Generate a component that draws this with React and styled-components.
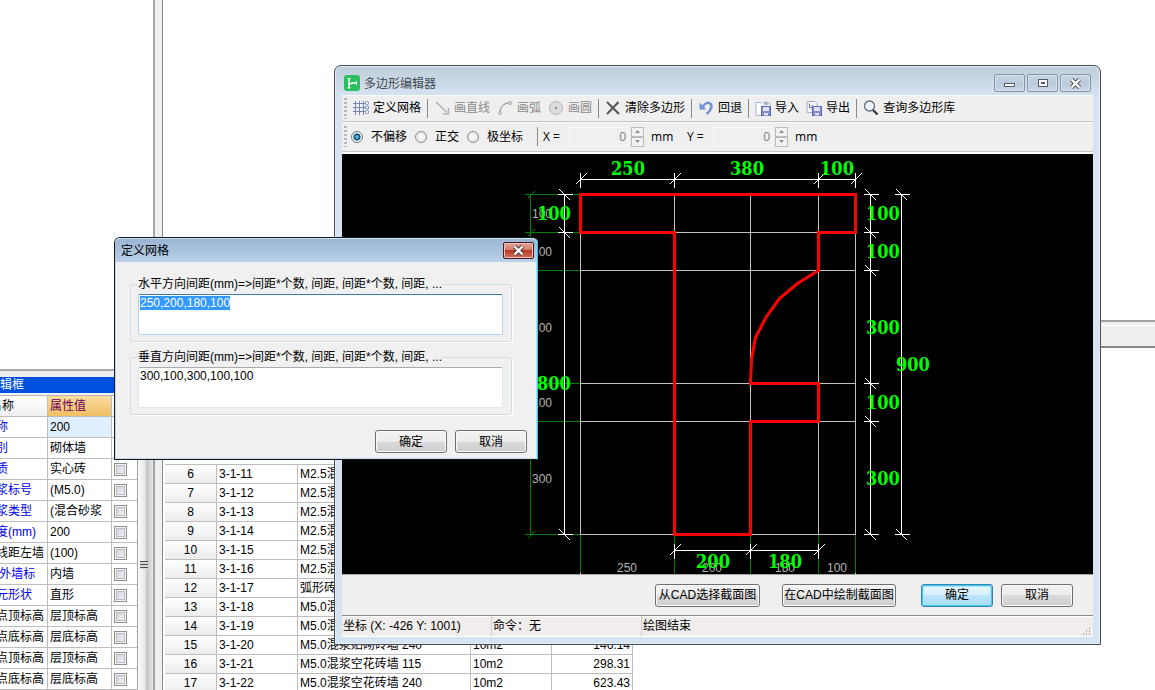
import React, { useEffect, useRef } from "react";
import styled, { createGlobalStyle, css } from "styled-components";

const GlobalStyle = createGlobalStyle`
  * { box-sizing: border-box; }
  html, body, #root { height: 100%; }
  body {
    margin: 0;
    overflow: hidden;
    background: #fff;
    color: #000;
    font: 12px/16px "Liberation Sans", "Noto Sans CJK SC", sans-serif;
  }
  button, input, textarea { font: inherit; color: inherit; }
`;

/* ---------- main application behind the windows ---------- */

const Desktop = styled.main`
  position: relative;
  display: flex;
  height: 100vh;
  overflow: hidden;
  background: #fff;
`;

const SidePane = styled.section`
  flex: none;
  display: flex;
  flex-direction: column;
  width: 193px;
  margin-left: -40px;
`;

const SideBlank = styled.div`
  flex: none;
  height: 369px;
`;

const SideTitle = styled.h2`
  flex: none;
  height: 27px;
  margin: 0;
  padding: 6px 0 0 4px;
  border-top: 2px solid #a9a9ad;
  border-bottom: 1px solid #b4b4b4;
  box-shadow: inset 0 6px #efedee, inset 0 -2px #f4f4f4;
  background: #0050e0;
  color: #fff;
  font-size: 12px;
  line-height: 16px;
  font-weight: 400;
`;

const SideBody = styled.div`
  flex: 1;
  display: flex;
  min-height: 0;
`;

const PropTable = styled.table`
  flex: 1;
  table-layout: fixed;
  border-collapse: separate;
  border-spacing: 0;
  height: max-content;
  td, th {
    height: 21px;
    padding: 0 0 0 2px;
    border-right: 1px solid #bdbdbd;
    border-bottom: 1px solid #bdbdbd;
    overflow: hidden;
    white-space: nowrap;
    text-align: left;
    font-weight: 400;
    line-height: 16px;
  }
  td:last-child, th:last-child { border-right: 0; }
  th:first-child { padding-left: 30px; }
`;

const PropHead = styled.th`
  background: ${(p) =>
    p.$active
      ? "linear-gradient(#f9dca0, #f0bf63)"
      : "linear-gradient(#ffffff, #f0f0f0)"};
  color: ${(p) => (p.$active ? "#6b0058" : "#000")};
`;

const PropName = styled.td`
  && { padding-left: 24px; }
  color: ${(p) => (p.$blue ? "#0000f0" : "#000")};
`;

const PropValue = styled.td`
  background: ${(p) => (p.$selected ? "#dfeffe" : "#fff")};
`;

const Tick = styled.input`
  appearance: none;
  display: block;
  width: 13px;
  height: 13px;
  margin: 0;
  border: 1px solid #8e8f8f;
  background: linear-gradient(135deg, #cbcfd5, #f6f6f6);
  box-shadow: inset 0 0 0 1px #f4f4f4, inset 0 0 0 2px #b9bcc2;
`;

const ScrollTrack = styled.div`
  flex: none;
  display: flex;
  justify-content: center;
  align-items: flex-start;
  width: 16px;
  padding-top: 165px;
  border-left: 1px solid #a0a0a0;
  background: linear-gradient(90deg, #fafafa, #e9e9ea 45%, #c4c4c6 60%, #e8e8e8);
`;

const ScrollGrip = styled.span`
  width: 8px;
  height: 8px;
  margin-right: 4px;
  background: repeating-linear-gradient(#4c4c4c 0 1px, #d8d8d8 1px 3px);
`;

const Splitter = styled.div`
  flex: none;
  width: 10px;
  border-left: 2px solid #a6a6aa;
  border-right: 1px solid #86868c;
  background: #efefef;
`;

const Workspace = styled.section`
  flex: 1;
  min-width: 0;
  display: flex;
  flex-direction: column;
`;

const WorkBlank = styled.div`
  flex: none;
  height: 320px;
`;

const WorkBand = styled.div`
  flex: none;
  height: 28px;
  border-top: 2px solid #a2a2a6;
  border-bottom: 2px solid #86868a;
  box-shadow: inset 0 3px #efefef, inset 0 4px #fff;
  background: #efefef;
`;

const QuotaTable = styled.table`
  width: 468px;
  margin: 116px 0 0 2px;
  table-layout: fixed;
  border-collapse: separate;
  border-spacing: 0;
  td {
    height: 19px;
    padding: 0 2px;
    border-right: 1px solid #bdbdbd;
    border-bottom: 1px solid #bdbdbd;
    overflow: hidden;
    white-space: nowrap;
    line-height: 16px;
  }
  tr:first-child td { border-top: 1px solid #bdbdbd; height: 20px; }
`;

const IndexCell = styled.td`
  background: linear-gradient(#ffffff, #ececec);
  text-align: center;
`;

const PriceCell = styled.td`
  text-align: right;
`;

/* ---------- shared window parts ---------- */

const PushButton = styled.button`
  height: 23px;
  min-width: ${(p) => p.$width || 72}px;
  padding: 0 1px;
  border: 1px solid #707070;
  border-radius: 3px;
  background: linear-gradient(#f3f3f3, #ebebeb 50%, #dadada 50%, #cdcdcd);
  box-shadow: inset 0 0 0 1px #fbfbfb;
  line-height: 16px;
  white-space: nowrap;
  ${(p) =>
    p.$primary &&
    css`
      border-color: #3c7fb1;
      background: linear-gradient(#eaf6fd, #d9f0fc 50%, #bde4fb 50%, #a9dbf6);
      box-shadow: inset 0 0 0 1px #3fcdf8, inset 0 0 0 2px #a5e6fb;
    `}
`;

/* ---------- polygon editor window ---------- */

const EditorWindow = styled.section`
  position: absolute;
  left: 334px;
  right: 54px;
  top: 65px;
  display: flex;
  flex-direction: column;
  padding: 0 7px 7px;
  border: 1px solid #4b4b52;
  border-radius: 7px 7px 0 0;
  background: linear-gradient(#bfcddb, #d6e4f1 30px);
  box-shadow: inset 0 0 0 1px #e4edf5;
`;

const TitleBar = styled.header`
  display: flex;
  align-items: center;
  height: 29px;
  padding: 5px 2px 0;
`;

const WindowTitle = styled.h1`
  flex: 1;
  margin: 0 0 0 4px;
  font: 400 12px/16px "Noto Sans CJK SC", sans-serif;
  color: #3f4750;
`;

const CaptionButtons = styled.div`
  display: flex;
  gap: 2px;
`;

const CaptionButton = styled.button`
  display: flex;
  align-items: center;
  justify-content: center;
  width: 31px;
  height: 18px;
  padding: 0;
  border: 1px solid #8793a6;
  border-radius: 2px;
  background: linear-gradient(#c9d6e4, #bccbdc 50%, #b9c9da 50%, #cbd9e7);
  box-shadow: inset 0 0 0 1px #d6e1ec;
`;

const ToolRow = styled.div`
  display: flex;
  align-items: center;
  gap: 1px;
  height: ${(p) => p.$height}px;
  padding-left: 2px;
  background: #efefef;
  border-bottom: 1px solid #c4c4c4;
  box-shadow: inset 0 1px #fafafa;
  font-family: "Open Sans", "Noto Sans CJK SC", sans-serif;
`;

const Grip = styled.span`
  width: 3px;
  height: 21px;
  margin-right: 2px;
  background: repeating-linear-gradient(#b9b9b9 0 2px, #efefef 2px 4px);
`;

const ToolButton = styled.button`
  display: flex;
  align-items: center;
  gap: 4px;
  padding: 0 3px;
  border: 0;
  background: none;
  line-height: 18px;
  white-space: nowrap;
  color: ${(p) => (p.disabled ? "#8a8a8a" : "#000")};
  svg { display: block; }
`;

const Separator = styled.span`
  width: 1px;
  height: 19px;
  margin: 0 2px;
  background: #8a8a8a;
`;

const ModeGroup = styled.div`
  display: flex;
  gap: 8px;
  margin: 0 11px 0 1px;
`;

const RadioLabel = styled.label`
  display: flex;
  align-items: center;
  gap: 8px;
  white-space: nowrap;
`;

const Radio = styled.input`
  appearance: none;
  width: 12px;
  height: 12px;
  margin: 0;
  border: 1px solid #8e8f8f;
  border-radius: 50%;
  background: radial-gradient(#fbfbfb 20%, #d3d3d3);
  &:checked {
    border-color: #6d7f8a;
    background: radial-gradient(circle, #4fb8e2 0 15%, #0c4c74 40%, #12405e 45%, #eef2f4 55%);
  }
`;

const CoordLabel = styled.label`
  width: 27px;
  padding-left: 2px;
  white-space: nowrap;
`;

const NumberBox = styled.span`
  display: flex;
  gap: 2px;
  width: 75px;
  height: 20px;
`;

const NumberInput = styled.input`
  flex: 1;
  min-width: 0;
  padding: 0 2px;
  border: 1px solid #f8f8f8;
  background: #f0f0f0;
  color: #808080;
  text-align: right;
`;

const SpinPair = styled.span`
  display: flex;
  flex-direction: column;
  width: 13px;
`;

const SpinButton = styled.button`
  flex: 1;
  display: flex;
  align-items: center;
  justify-content: center;
  min-height: 0;
  padding: 0;
  border: 1px solid #bcbcbc;
  background: #f2f2f2;
`;

const Unit = styled.span`
  width: 39px;
  padding-left: 6px;
`;

const CanvasFrame = styled.div`
  border-top: 2px solid #fff;
  border-bottom: 1px solid #a5a5a5;
  background: #000;
  svg { display: block; width: 100%; height: auto; }
`;

const ActionBar = styled.footer`
  display: flex;
  align-items: center;
  justify-content: flex-end;
  gap: 8px;
  height: 40px;
  padding-right: 20px;
  background: #efefef;
`;

const CadActions = styled.div`
  display: flex;
  gap: 22px;
  margin-right: 17px;
`;

const StatusBar = styled.div`
  display: flex;
  height: 22px;
  border-top: 1px solid #8c8c8c;
  border-bottom: 1px solid #fff;
  box-shadow: inset 0 1px #fff;
  background: #f0edec;
`;

const StatusCell = styled.div`
  flex: ${(p) => (p.$width ? `0 0 ${p.$width}px` : "1")};
  padding: 2px 0 0 1px;
  border-right: ${(p) => (p.$width ? "1px solid #d0d0d0" : "0")};
  white-space: nowrap;
`;

const SizeGrip = styled.div`
  display: flex;
  align-items: flex-end;
  padding: 0 2px 1px 0;
`;

/* ---------- grid definition dialog ---------- */

const Dialog = styled.section`
  position: absolute;
  left: 114px;
  top: 237px;
  width: 424px;
  border: 1px solid #101820;
  border-right-color: #35c8ea;
  border-radius: 6px 6px 0 0;
  background: #f0f0f0;
  box-shadow: inset 0 0 0 1px #c2d8ee, inset 0 -1px #35c8ea;
`;

const DialogTitleBar = styled.header`
  display: flex;
  align-items: center;
  justify-content: space-between;
  height: 24px;
  padding: 0 3px 0 6px;
  border-radius: 5px 5px 0 0;
  background: linear-gradient(#99b4d1, #b9d1ea);
  box-shadow: inset 0 1px #d5e3f1;
`;

const DialogTitle = styled.h2`
  margin: 0;
  font: 400 12px/16px "Noto Sans CJK SC", sans-serif;
`;

const RedClose = styled.button`
  display: flex;
  align-items: center;
  justify-content: center;
  width: 31px;
  height: 17px;
  padding: 0;
  border: 1px solid #4a1a26;
  border-radius: 2px;
  background: linear-gradient(#e3a69b, #d07a6a 48%, #b93a24 50%, #d0705a);
  box-shadow: inset 0 0 0 1px #ecc0b8;
`;

const DialogForm = styled.form`
  display: flex;
  flex-direction: column;
  padding: 14px 10px 6px 15px;
`;

const SpacingGroup = styled.fieldset`
  min-width: 0;
  margin: 0 15px 7px 0;
  padding: 2px 8px 6px 7px;
  border: 1px solid #d3dde4;
  border-radius: 3px;
  box-shadow: 1px 1px #fff;
`;

const SpacingLegend = styled.legend`
  padding: 0;
  height: 16px;
  line-height: 16px;
  white-space: nowrap;
`;

const SpacingInput = styled.textarea`
  display: block;
  width: 100%;
  height: 41px;
  padding: 2px 1px;
  border: 1px solid #e1e6ed;
  border-top-color: #a9abb1;
  border-radius: 2px;
  outline: 0;
  resize: none;
  background: #fff;
  line-height: 13px;
  &:focus {
    border-color: #b0d4ee;
    border-top-color: #3d7bad;
  }
  &::selection {
    background: #3399ff;
    color: #fff;
  }
`;

const DialogButtons = styled.div`
  display: flex;
  justify-content: flex-end;
  gap: 8px;
  margin-top: 8px;
`;

/* ---------- data ---------- */

const PROPERTIES = [
  ["名称", "200", true],
  ["类别", "砌体墙", true],
  ["材质", "实心砖", true],
  ["砂浆标号", "(M5.0)", true],
  ["砂浆类型", "(混合砂浆", true],
  ["厚度(mm)", "200", true],
  ["轴线距左墙", "(100)", false],
  ["内/外墙标", "内墙", true],
  ["图元形状", "直形", true],
  ["起点顶标高", "层顶标高", false],
  ["起点底标高", "层底标高", false],
  ["终点顶标高", "层顶标高", false],
  ["终点底标高", "层底标高", false],
];

const QUOTAS = [
  [6, "3-1-11", "M2.5混浆"],
  [7, "3-1-12", "M2.5混浆"],
  [8, "3-1-13", "M2.5混浆"],
  [9, "3-1-14", "M2.5混浆"],
  [10, "3-1-15", "M2.5混浆"],
  [11, "3-1-16", "M2.5混浆"],
  [12, "3-1-17", "弧形砖墙"],
  [13, "3-1-18", "M5.0混浆"],
  [14, "3-1-19", "M5.0混浆"],
  [15, "3-1-20", "M5.0混浆贴砌砖墙 240", "10m2", "146.14"],
  [16, "3-1-21", "M5.0混浆空花砖墙 115", "10m2", "298.31"],
  [17, "3-1-22", "M5.0混浆空花砖墙 240", "10m2", "623.43"],
];

const GRID_X = [238, 332, 408, 476, 513];
const GRID_Y = [40, 78, 116, 229, 267, 380];

/* ---------- icons ---------- */

const Icon = ({ children, size = 16 }) => (
  <svg width={size} height={size} viewBox="0 0 16 16" fill="none" aria-hidden="true">
    {children}
  </svg>
);

const AppIcon = () => (
  <Icon>
    <rect width="16" height="16" rx="3" fill="#2bbf62" />
    <path d="M5 3v10M5 9.500L8 8h4.500" stroke="#fff" strokeWidth="1.400" />
    <path d="M3.500 3.500h3M3.500 13h3M12.500 6v4" stroke="#fff" />
  </Icon>
);

const GridIcon = () => (
  <Icon>
    <path
      d="M2.500 1v14M6.500 1v14M10.500 1v14M0 3.500h13M0 7.500h13M0 11.500h13"
      stroke="#7388bd"
    />
    <rect x="12.500" y="1.500" width="3" height="3" rx="1" fill="#f4f4f4" stroke="#7388bd" />
    <rect x="12.500" y="6" width="3" height="3" rx="1" fill="#f4f4f4" stroke="#7388bd" />
    <rect x="12.500" y="10.500" width="3" height="3" rx="1" fill="#f4f4f4" stroke="#7388bd" />
  </Icon>
);

const LineIcon = () => (
  <Icon>
    <path d="M2 2l11 10.500" stroke="#b2b2b2" strokeWidth="1.500" />
    <path d="M14.500 8v6H9" stroke="#b2b2b2" strokeWidth="1.500" />
  </Icon>
);

const ArcIcon = () => (
  <Icon>
    <path d="M3 13C3 7 7 3 13 2.500" stroke="#a8a8a8" strokeWidth="1.500" />
    <circle cx="3" cy="13" r="1.500" fill="#eee" stroke="#a8a8a8" />
    <circle cx="13" cy="3" r="1.500" fill="#eee" stroke="#a8a8a8" />
  </Icon>
);

const CircleIcon = () => (
  <Icon>
    <circle cx="8" cy="8" r="6.500" fill="#dcdcdc" stroke="#b8b8b8" />
    <rect x="7" y="7" width="2" height="2" fill="#8c8c8c" />
  </Icon>
);

const ClearIcon = () => (
  <Icon>
    <path d="M2 2l12 12M13.500 2L2 14" stroke="#555" strokeWidth="2" />
  </Icon>
);

const UndoIcon = () => (
  <Icon>
    <path d="M5 6.500C7 3 10 2 12 3.500c3 2.500 1 7-3.500 10.500" stroke="#7393d4" strokeWidth="2.600" />
    <path d="M1.500 2.500v7h7z" fill="#7393d4" />
  </Icon>
);

const Disk = ({ x, y }) => (
  <g transform={`translate(${x} ${y})`}>
    <rect x=".5" y=".5" width="9" height="9" fill="#868cc9" stroke="#666cb0" />
    <rect x="2" y="1" width="6" height="4" fill="#dfe2f4" />
    <rect x="3" y="7" width="4" height="2.500" fill="#dfe2f4" />
  </g>
);

const ImportIcon = () => (
  <Icon>
    <path d="M1 2.500h6l3 3v10H1z" fill="#fbfdff" stroke="#a3b8dc" />
    <path d="M10 1v3h3M10 4c1.500-2.500 4-2.500 5.500 1" stroke="#8a93a8" />
    <Disk x={6} y={6} />
  </Icon>
);

const ExportIcon = () => (
  <Icon>
    <path d="M1 1.500h8l2 2v9H1z" fill="#f6f7fb" stroke="#a3abc0" />
    <path d="M3.500 3.500v4h4M5.500 5l2.500 2.500-2.500 2" stroke="#6d7486" />
    <Disk x={6} y={6} />
  </Icon>
);

const SearchIcon = () => (
  <Icon>
    <circle cx="6.500" cy="6" r="5" fill="#eaf6fc" stroke="#666d75" strokeWidth="1.300" />
    <path d="M10 10l4.500 4.500" stroke="#3c3c3c" strokeWidth="2.400" />
  </Icon>
);

const SpinArrow = ({ down }) => (
  <svg width="5" height="3" viewBox="0 0 5 3" aria-hidden="true">
    <path d={down ? "M0 0h5L2.500 3z" : "M0 3h5L2.500 0z"} fill="#8f8f8f" />
  </svg>
);

const CrossGlyph = ({ stroke, fill }) => (
  <svg width="13" height="11" viewBox="0 0 13 11" aria-hidden="true">
    <path d="M2.500 1.500l8 8M10.500 1.500l-8 8" stroke={stroke} strokeWidth="4.400" />
    <path d="M2.500 1.500l8 8M10.500 1.500l-8 8" stroke={fill} strokeWidth="2.400" />
  </svg>
);

/* ---------- drawing ---------- */

const HTick = ({ x, y }) => <path d={`M${x} ${y - 7}v15M${x - 5} ${y + 5}l11 -11`} />;
const VTick = ({ x, y }) => <path d={`M${x - 7} ${y}h15M${x - 5} ${y - 5}l11 11`} />;

const GreenText = styled.text`
  fill: #00ff00;
  font: 700 18px "DejaVu Serif Condensed", "DejaVu Serif", serif;
  text-anchor: ${(p) => (p.$start ? "start" : "middle")};
`;

const GrayText = styled.text`
  fill: #b4b4b4;
  font: 12px "Liberation Sans", sans-serif;
  text-anchor: ${(p) => (p.$start ? "start" : "middle")};
`;

const HLabels = ({ as: Label, y, items }) =>
  items.map(([x, text]) => (
    <Label key={x} x={x} y={y}>
      {text}
    </Label>
  ));

const VLabels = ({ as: Label, x, items }) =>
  items.map(([y, text]) => (
    <Label key={y} x={x} y={y} $start>
      {text}
    </Label>
  ));

const Drawing = () => (
  <svg viewBox="0 0 751 420" role="img" aria-label="多边形">
    <g transform="translate(.5 .5)" fill="none" shapeRendering="crispEdges">
      <g stroke="#008000">
        <path d="M188 40V380" />
        {GRID_Y.map((y) => (
          <path key={y} d={`M182 ${y}H238M185 ${y + 4}l7 -7`} />
        ))}
        {GRID_X.map((x) => (
          <path key={x} d={`M${x} 380V420`} />
        ))}
      </g>
      <g stroke="#c0c0c0">
        {GRID_Y.map((y) => (
          <path key={y} d={`M238 ${y}H513`} />
        ))}
        {GRID_X.map((x) => (
          <path key={x} d={`M${x} 40V380`} />
        ))}
      </g>
    </g>
    <HLabels as={GrayText} y={418} items={[[285, "250"], [370, "200"], [443, "180"], [495, "100"]]} />
    <VLabels
      as={GrayText}
      x={190}
      items={[[64, "100"], [102, "100"], [178, "300"], [253, "100"], [329, "300"]]}
    />
    <g transform="translate(.5 .5)" fill="none" shapeRendering="crispEdges" stroke="#fff">
      <path d="M238 25H513M332 396H476M222 40V380M528 40V380M559 40V380M238 418v2M513 418v2" />
      {[238, 332, 476, 513].map((x) => (
        <HTick key={x} x={x} y={25} />
      ))}
      {[332, 408, 476].map((x) => (
        <HTick key={x} x={x} y={396} />
      ))}
      {[40, 78, 380].map((y) => (
        <VTick key={y} x={222} y={y} />
      ))}
      {GRID_Y.map((y) => (
        <VTick key={y} x={528} y={y} />
      ))}
      {[40, 380].map((y) => (
        <VTick key={y} x={559} y={y} />
      ))}
    </g>
    <path
      d="M238 40H513V78H476V116L455 129L437 144L424 162L413 183L409 205L408 229H476V267H408V380H332V78H238Z"
      transform="translate(.5 .5)"
      fill="none"
      stroke="#ff0000"
      strokeWidth="3"
    />
    <HLabels as={GreenText} y={21} items={[[286, "250"], [405, "380"], [495, "100"]]} />
    <HLabels as={GreenText} y={414} items={[[371, "200"], [443, "180"]]} />
    <VLabels as={GreenText} x={195} items={[[66, "100"], [236, "800"]]} />
    <VLabels
      as={GreenText}
      x={524}
      items={[[66, "100"], [104, "100"], [180, "300"], [255, "100"], [331, "300"]]}
    />
    <VLabels as={GreenText} x={554} items={[[217, "900"]]} />
  </svg>
);

/* ---------- screens ---------- */

const PropertyPanel = () => (
  <SidePane>
    <SideBlank />
    <SideTitle>属性编辑框</SideTitle>
    <SideBody>
      <PropTable>
        <colgroup>
          <col width="88" />
          <col width="64" />
          <col />
        </colgroup>
        <thead>
          <tr>
            <PropHead>名称</PropHead>
            <PropHead $active>属性值</PropHead>
            <PropHead />
          </tr>
        </thead>
        <tbody>
          {PROPERTIES.map(([name, value, blue], i) => (
            <tr key={i}>
              <PropName $blue={blue}>{name}</PropName>
              <PropValue $selected={i === 0}>{value}</PropValue>
              <td>{i > 1 && <Tick type="checkbox" aria-label={name} />}</td>
            </tr>
          ))}
        </tbody>
      </PropTable>
      <ScrollTrack>
        <ScrollGrip />
      </ScrollTrack>
    </SideBody>
  </SidePane>
);

const QuotaPanel = () => (
  <Workspace>
    <WorkBlank />
    <WorkBand />
    <QuotaTable>
      <colgroup>
        <col width="52" />
        <col width="81" />
        <col width="173" />
        <col width="81" />
        <col width="81" />
      </colgroup>
      <tbody>
        {QUOTAS.map(([no, code, name, unit, price]) => (
          <tr key={no}>
            <IndexCell>{no}</IndexCell>
            <td>{code}</td>
            <td>{name}</td>
            <td>{unit}</td>
            <PriceCell>{price}</PriceCell>
          </tr>
        ))}
      </tbody>
    </QuotaTable>
  </Workspace>
);

const Coordinate = ({ id, label }) => (
  <>
    <CoordLabel htmlFor={id}>{label}</CoordLabel>
    <NumberBox>
      <NumberInput id={id} type="text" defaultValue="0" disabled />
      <SpinPair>
        <SpinButton type="button" aria-label="+" disabled>
          <SpinArrow />
        </SpinButton>
        <SpinButton type="button" aria-label="-" disabled>
          <SpinArrow down />
        </SpinButton>
      </SpinPair>
    </NumberBox>
    <Unit>mm</Unit>
  </>
);

const PolygonEditor = () => (
  <EditorWindow>
    <TitleBar>
      <AppIcon />
      <WindowTitle>多边形编辑器</WindowTitle>
      <CaptionButtons>
        <CaptionButton aria-label="最小化">
          <svg width="13" height="9" viewBox="0 0 13 9" aria-hidden="true">
            <rect x="1.500" y="4.500" width="10" height="3" fill="#fff" stroke="#555b66" />
          </svg>
        </CaptionButton>
        <CaptionButton aria-label="最大化">
          <svg width="12" height="10" viewBox="0 0 12 10" aria-hidden="true">
            <rect x="1.500" y="1.500" width="9" height="7" fill="#fff" stroke="#555b66" />
            <rect x="4.500" y="4.500" width="3" height="1" fill="#b8c8d9" stroke="#555b66" />
          </svg>
        </CaptionButton>
        <CaptionButton aria-label="关闭">
          <CrossGlyph stroke="#555b66" fill="#fff" />
        </CaptionButton>
      </CaptionButtons>
    </TitleBar>
    <ToolRow $height={27}>
      <Grip />
      <ToolButton><GridIcon />定义网格</ToolButton>
      <Separator />
      <ToolButton disabled><LineIcon />画直线</ToolButton>
      <ToolButton disabled><ArcIcon />画弧</ToolButton>
      <ToolButton disabled><CircleIcon />画圆</ToolButton>
      <Separator />
      <ToolButton><ClearIcon />清除多边形</ToolButton>
      <Separator />
      <ToolButton><UndoIcon />回退</ToolButton>
      <Separator />
      <ToolButton><ImportIcon />导入</ToolButton>
      <ToolButton><ExportIcon />导出</ToolButton>
      <Separator />
      <ToolButton><SearchIcon />查询多边形库</ToolButton>
    </ToolRow>
    <ToolRow $height={30}>
      <Grip />
      <ModeGroup>
        <RadioLabel><Radio type="radio" name="mode" defaultChecked />不偏移</RadioLabel>
        <RadioLabel><Radio type="radio" name="mode" />正交</RadioLabel>
        <RadioLabel><Radio type="radio" name="mode" />极坐标</RadioLabel>
      </ModeGroup>
      <Separator />
      <Coordinate id="coord-x" label="X =" />
      <Coordinate id="coord-y" label="Y =" />
    </ToolRow>
    <CanvasFrame>
      <Drawing />
    </CanvasFrame>
    <ActionBar>
      <CadActions>
        <PushButton $width={105}>从CAD选择截面图</PushButton>
        <PushButton $width={114}>在CAD中绘制截面图</PushButton>
      </CadActions>
      <PushButton $primary>确定</PushButton>
      <PushButton>取消</PushButton>
    </ActionBar>
    <StatusBar>
      <StatusCell $width={150}>坐标 (X: -426 Y: 1001)</StatusCell>
      <StatusCell $width={150}>命令：无</StatusCell>
      <StatusCell>绘图结束</StatusCell>
      <SizeGrip>
        <svg width="9" height="9" viewBox="0 0 9 9" fill="#b5b1b0" aria-hidden="true">
          <path d="M7 1h1v2H7zM7 4h1v2H7zM4 4h1v2H4zM7 7h1v2H7zM4 7h1v2H4zM1 7h1v2H1z" />
        </svg>
      </SizeGrip>
    </StatusBar>
  </EditorWindow>
);

const GridDialog = () => {
  const first = useRef(null);
  useEffect(() => {
    first.current.focus();
    first.current.select();
  }, []);
  return (
    <Dialog role="dialog" aria-labelledby="grid-title">
      <DialogTitleBar>
        <DialogTitle id="grid-title">定义网格</DialogTitle>
        <RedClose aria-label="关闭">
          <CrossGlyph stroke="#5a3a46" fill="#fff" />
        </RedClose>
      </DialogTitleBar>
      <DialogForm>
        <SpacingGroup>
          <SpacingLegend id="spacing-h">
            水平方向间距(mm)=&gt;间距*个数, 间距, 间距*个数, 间距, ...
          </SpacingLegend>
          <SpacingInput
            ref={first}
            aria-labelledby="spacing-h"
            defaultValue="250,200,180,100"
            spellCheck={false}
          />
        </SpacingGroup>
        <SpacingGroup>
          <SpacingLegend id="spacing-v">
            垂直方向间距(mm)=&gt;间距*个数, 间距, 间距*个数, 间距, ...
          </SpacingLegend>
          <SpacingInput
            aria-labelledby="spacing-v"
            defaultValue="300,100,300,100,100"
            spellCheck={false}
          />
        </SpacingGroup>
        <DialogButtons>
          <PushButton type="button">确定</PushButton>
          <PushButton type="button">取消</PushButton>
        </DialogButtons>
      </DialogForm>
    </Dialog>
  );
};

export default function App() {
  return (
    <>
      <GlobalStyle />
      <Desktop>
        <PropertyPanel />
        <Splitter />
        <QuotaPanel />
        <PolygonEditor />
        <GridDialog />
      </Desktop>
    </>
  );
}
